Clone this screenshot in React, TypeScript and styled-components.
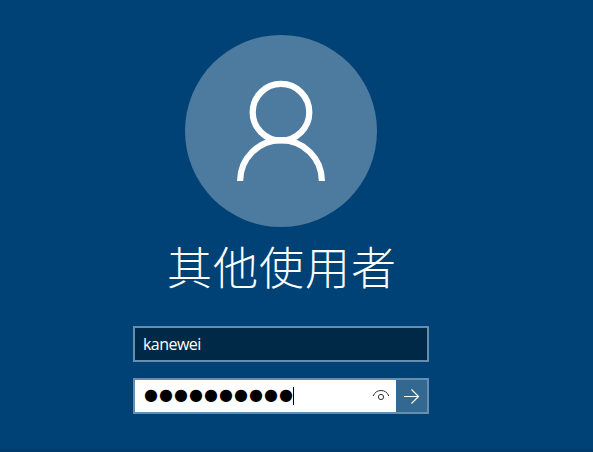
import React from "react";
import styled, { createGlobalStyle } from "styled-components";

const GlobalStyle = createGlobalStyle`
  * { box-sizing: border-box; }
  body { margin: 0; background: #004275; }
`;

const Screen = styled.main`
  height: 452px;
  padding: 35px 31px 0 0;
  display: flex;
  flex-direction: column;
  align-items: center;
  overflow: hidden;
  background: #004275;
  border-bottom: 3px solid #003d6e;
  color: #fff;
  font-family: "Open Sans", "Noto Sans", sans-serif;
`;

const Avatar = styled.div`
  width: 192px;
  height: 192px;
  flex: none;
  border-radius: 50%;
  background: #4d7a9f;
`;

const Title = styled.h1`
  margin: 6px 0 0;
  padding-left: 2px;
  height: 66px;
  font: 300 45px/66px "Noto Sans CJK TC", sans-serif;
  letter-spacing: 1px;
  white-space: nowrap;
`;

const Form = styled.form`
  width: 296px;
  margin-top: 27px;
  display: flex;
  flex-direction: column;
  gap: 16px;
`;

const Field = styled.div<{ $active?: boolean }>`
  height: 36px;
  display: flex;
  align-items: center;
  border: 2px solid #668eae;
  padding-left: 8px;
  background: ${(p) => (p.$active ? "#fff" : "#002847")};
  color: ${(p) => (p.$active ? "#000" : "#fff")};
`;

const UserName = styled.span`
  font-size: 16px;
  line-height: 20px;
  letter-spacing: -0.55px;
  padding-bottom: 1px;
`;

const Secret = styled.span`
  width: 150px;
  padding-left: 1px;
  padding-bottom: 3px;
  font: 16px/20px "DejaVu Sans", sans-serif;
  letter-spacing: 1.05px;
  white-space: nowrap;
`;

const Caret = styled.span`
  width: 1px;
  height: 18px;
  margin-bottom: 1px;
  background: #000;
`;

const IconButton = styled.button<{ $filled?: boolean }>`
  width: 31px;
  height: 32px;
  padding: 0;
  border: 0;
  display: block;
  flex: none;
  background: ${(p) => (p.$filled ? "#336891" : "transparent")};
  &:first-of-type { margin-left: auto; }
  svg { display: block; }
`;

export default function App() {
  return (
    <>
      <GlobalStyle />
      <Screen>
        <Avatar>
          <svg width="192" height="192" fill="none" stroke="#fff" strokeWidth="6.2">
            <circle cx="96" cy="77.2" r="28.3" />
            <path d="M55.1 146A40.9 40.9 0 0 1 136.9 146" />
          </svg>
        </Avatar>
        <Title>其他使用者</Title>
        <Form>
          <Field>
            <UserName>kanewei</UserName>
          </Field>
          <Field $active>
            <Secret>●●●●●●●●●●</Secret>
            <Caret />
            <IconButton type="button" aria-label="顯示密碼">
              <svg width="31" height="32" fill="none" stroke="#333">
                <path d="M8.2 16C9.4 12.5 12.4 10.5 16 10.5S22.6 12.5 23.8 16" />
                <circle cx="16" cy="17" r="2.6" />
              </svg>
            </IconButton>
            <IconButton type="button" $filled aria-label="提交">
              <svg width="31" height="32" fill="none" stroke="#fff" strokeWidth="1.2">
                <path d="M8 16.5H22.5M15.5 9.5L22.5 16.5L15.5 23.5" />
              </svg>
            </IconButton>
          </Field>
        </Form>
      </Screen>
    </>
  );
}
